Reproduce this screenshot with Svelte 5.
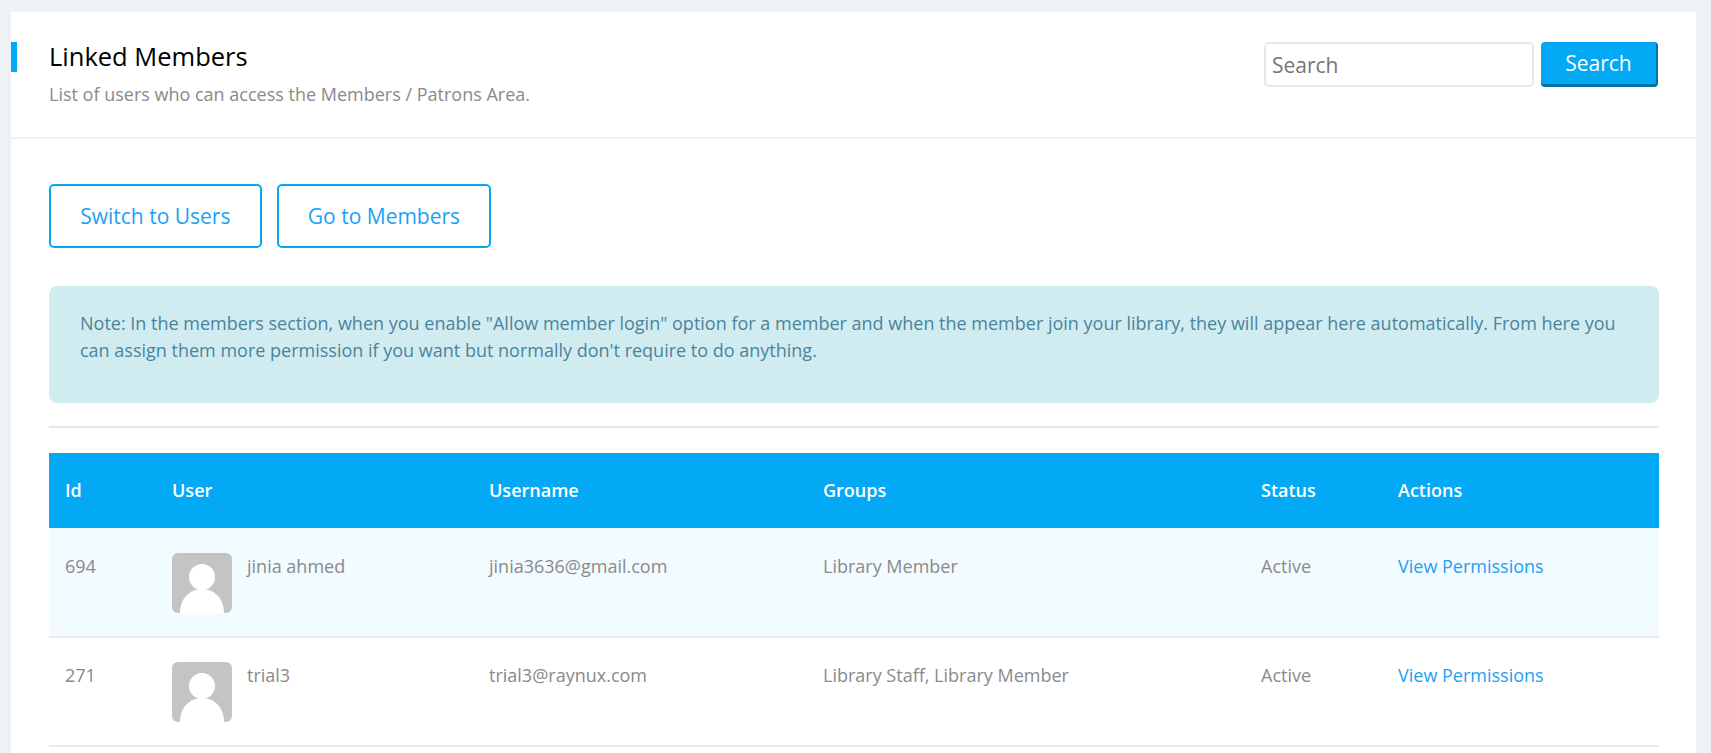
<script>
    const members = [
        { id: 694, name: 'jinia ahmed', username: 'jinia3636@gmail.com', groups: 'Library Member', status: 'Active' },
        { id: 271, name: 'trial3', username: 'trial3@raynux.com', groups: 'Library Staff, Library Member', status: 'Active' }
    ];
</script>

<div class="page">
    <div class="card">
        <div class="card-header">
            <div class="heading">
                <h1>Linked Members</h1>
                <p>List of users who can access the Members / Patrons Area.</p>
            </div>
            <form class="search" on:submit|preventDefault>
                <input type="text" placeholder="Search">
                <button type="submit">Search</button>
            </form>
        </div>

        <div class="card-body">
            <div class="actions">
                <a href="#users" class="outline">Switch to Users</a>
                <a href="#members" class="outline">Go to Members</a>
            </div>

            <div class="note">
                Note: In the members section, when you enable "Allow member login" option for a member and when the member join your library, they will appear here automatically. From here you can assign them more permission if you want but normally don't require to do anything.
            </div>

            <hr>

            <table>
                <colgroup>
                    <col class="c-id">
                    <col class="c-user">
                    <col class="c-username">
                    <col class="c-groups">
                    <col class="c-status">
                    <col class="c-actions">
                </colgroup>
                <thead>
                    <tr>
                        <th>Id</th>
                        <th>User</th>
                        <th>Username</th>
                        <th>Groups</th>
                        <th>Status</th>
                        <th>Actions</th>
                    </tr>
                </thead>
                <tbody>
                    {#each members as member (member.id)}
                    <tr>
                        <td>{member.id}</td>
                        <td>
                            <div class="user">
                                <svg class="avatar" viewBox="0 0 60 60" aria-hidden="true">
                                    <circle cx="30" cy="24" r="13" fill="#fff"/>
                                    <path d="M8 60 C8 45 18 36 30 36 C42 36 52 45 52 60 Z" fill="#fff"/>
                                </svg>
                                <span>{member.name}</span>
                            </div>
                        </td>
                        <td>{member.username}</td>
                        <td>{member.groups}</td>
                        <td>{member.status}</td>
                        <td><a href="#view" class="link">View Permissions</a></td>
                    </tr>
                    {/each}
                </tbody>
            </table>
        </div>
    </div>
</div>

<style>
    :global(html), :global(body) {
        height: 100%;
        overflow: hidden;
    }
    :global(body) {
        background-color: #eef2f6;
        font-family: "Open Sans", sans-serif;
    }
    .page {
        padding: 12px 15px 0 11px;
    }
    .card {
        background-color: #fff;
        height: 900px;
    }
    .card-header {
        display: flex;
        justify-content: space-between;
        align-items: flex-start;
        padding: 30px 38px 0;
        height: 95px;
        border-bottom: 2px solid #f0f0f0;
        position: relative;
    }
    .card-header::before {
        content: '';
        position: absolute;
        left: 0;
        top: 30px;
        width: 6px;
        height: 30px;
        background-color: #03a9f4;
    }
    h1 {
        margin: 0;
        font-size: 25.5px;
        font-weight: 400;
        line-height: 28px;
        color: #000;
    }
    .heading p {
        margin: 11px 0 0;
        font-size: 18px;
        line-height: 27px;
        color: #8a8a8a;
    }
    .search {
        display: flex;
        gap: 7px;
    }
    .search input {
        width: 270px;
        height: 45px;
        box-sizing: border-box;
        padding: 0 6px;
        border: 2px solid #e8e8e8;
        border-radius: 5px;
        font-family: inherit;
        font-size: 21px;
        outline: none;
    }
    .search input::placeholder {
        color: #757575;
    }
    .search button {
        width: 117px;
        height: 45px;
        padding: 0;
        background-color: #03a9f4;
        border: none;
        border-right: 2px solid #0272a4;
        border-bottom: 3px solid #0272a4;
        border-radius: 4px;
        color: #fff;
        font-family: inherit;
        font-size: 21px;
    }
    .card-body {
        padding: 45px 37px 0 38px;
    }
    .actions {
        display: flex;
        gap: 15px;
    }
    .outline {
        display: block;
        box-sizing: border-box;
        height: 64px;
        padding: 0 29.2px;
        border: 2px solid #03a9f4;
        border-radius: 5px;
        line-height: 60px;
        font-size: 21px;
        color: #1e9ff2;
        text-decoration: none;
    }
    .note {
        margin-top: 38px;
        height: 117px;
        box-sizing: border-box;
        padding: 24px 31px;
        background-color: #d1ecf1;
        border-radius: 8px;
        font-size: 18px;
        line-height: 27px;
        color: #4a849c;
    }
    hr {
        margin: 23px 0 25px;
        border: none;
        border-top: 2px solid #e8e8e8;
    }
    table {
        width: 100%;
        table-layout: fixed;
        border-collapse: collapse;
        font-size: 18px;
    }
    .c-id { width: 107px; }
    .c-user { width: 317px; }
    .c-username { width: 334px; }
    .c-groups { width: 438px; }
    .c-status { width: 137px; }
    th {
        box-sizing: border-box;
        height: 75px;
        padding: 0 16px 1px;
        background-color: #03a9f4;
        color: #fff;
        font-weight: 600;
        text-align: left;
    }
    td {
        height: 109px;
        box-sizing: border-box;
        padding: 24px 16px 0;
        vertical-align: top;
        line-height: 27px;
        color: #8a8a8a;
        border-bottom: 2px solid #e8ecef;
    }
    tbody tr:first-child td {
        padding-top: 25px;
    }
    tbody tr:nth-child(odd) {
        background-color: #f2fbff;
    }
    .user {
        display: flex;
        gap: 15px;
    }
    .avatar {
        width: 60px;
        height: 60px;
        background-color: #c4c4c4;
        border-radius: 6px;
        flex: none;
    }
    .link {
        color: #1e9ff2;
        text-decoration: none;
    }
</style>
